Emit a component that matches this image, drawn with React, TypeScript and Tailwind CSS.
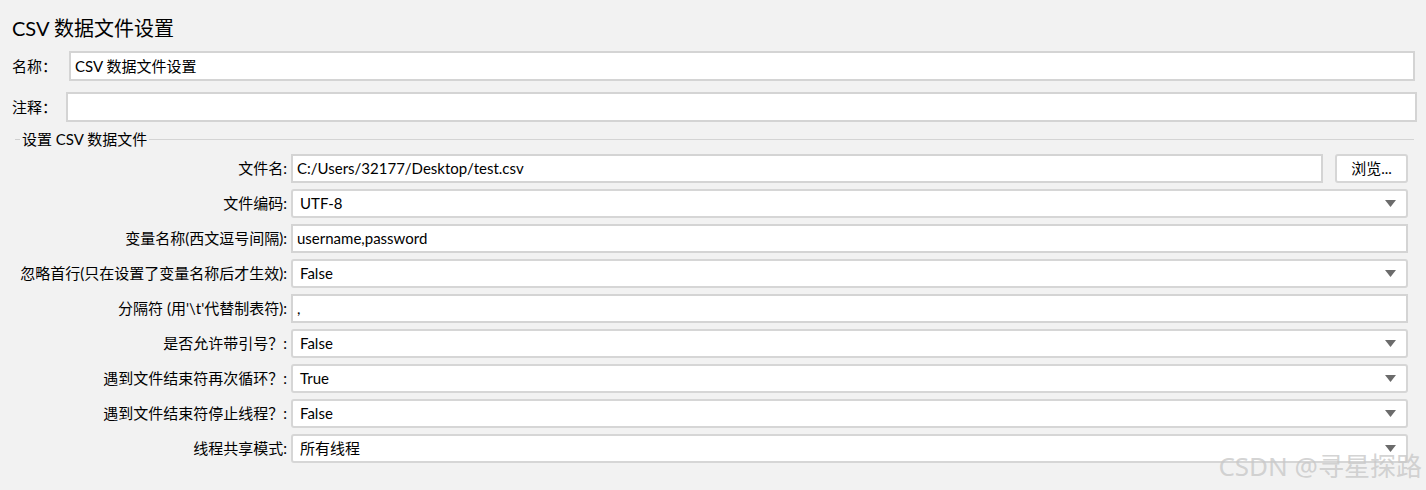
import React from 'react';

/* ------------------------------------------------------------------
 * small pieces
 * ---------------------------------------------------------------- */
const font = "font-['Segoe_UI','Lato','Noto_Sans_CJK_SC',sans-serif]";

const TextBox: React.FC<{ value?: string; className?: string }> = ({ value = '', className = '' }) => (
  <div
    className={`h-full flex items-center bg-white border-2 border-[#d4d4d4] pl-[4px] text-[15px] text-black whitespace-nowrap overflow-hidden ${className}`}
  >
    {value}
  </div>
);

const Combo: React.FC<{ value: string }> = ({ value }) => (
  <div className="flex-1 h-full flex items-center justify-between bg-white border-2 border-[#d6d6d6] rounded-[3px] pl-[7px] pr-[10px] text-[15px] text-black">
    <span>{value}</span>
    <svg width="11" height="7" viewBox="0 0 11 7">
      <path d="M0 0 H11 L5.5 7 Z" fill="#6b6b6b" />
    </svg>
  </div>
);

type Row = { label: string; value: string; kind: 'text' | 'combo' | 'file' };

const rows: Row[] = [
  { label: '文件名:', value: 'C:/Users/32177/Desktop/test.csv', kind: 'file' },
  { label: '文件编码:', value: 'UTF-8', kind: 'combo' },
  { label: '变量名称(西文逗号间隔):', value: 'username,password', kind: 'text' },
  { label: '忽略首行(只在设置了变量名称后才生效):', value: 'False', kind: 'combo' },
  { label: "分隔符 (用'\\t'代替制表符):", value: ',', kind: 'text' },
  { label: '是否允许带引号？:', value: 'False', kind: 'combo' },
  { label: '遇到文件结束符再次循环？:', value: 'True', kind: 'combo' },
  { label: '遇到文件结束符停止线程？:', value: 'False', kind: 'combo' },
  { label: '线程共享模式:', value: '所有线程', kind: 'combo' },
];

/* ------------------------------------------------------------------
 * page
 * ---------------------------------------------------------------- */
export default function App() {
  return (
    <div className={`relative w-[1426px] h-[490px] overflow-hidden bg-[#f2f2f2] text-black ${font}`}>
      {/* title */}
      <div className="h-[51px] pl-[12px] pt-[14px] text-[20px] leading-[28px]">CSV 数据文件设置</div>

      {/* name */}
      <div className="flex items-center h-[30px] pl-[12px] pr-[11px]">
        <span className="w-[57px] text-[15px]">名称：</span>
        <TextBox value="CSV 数据文件设置" className="flex-1" />
      </div>

      {/* comment */}
      <div className="flex items-center h-[30px] mt-[11px] pl-[12px] pr-[9px]">
        <span className="w-[54px] text-[15px]">注释：</span>
        <TextBox className="flex-1" />
      </div>

      {/* group title */}
      <div className="flex items-center h-[22px] mt-[6px] pl-[15px] pr-[12px]">
        <div className="w-[5px] h-px bg-[#cfcfcf]" />
        <span className="px-[2px] text-[15px] leading-[22px]">设置 CSV 数据文件</span>
        <div className="flex-1 h-px bg-[#d4d4d4]" />
      </div>

      {/* form rows */}
      <div className="flex flex-col gap-[6px] mt-[4px] pr-[18px]">
        {rows.map((r) => (
          <div key={r.label} className="flex items-center h-[29px]">
            <span className="w-[291px] pr-[4px] text-right text-[15px] whitespace-nowrap">{r.label}</span>
            {r.kind === 'combo' && <Combo value={r.value} />}
            {r.kind === 'text' && <TextBox value={r.value} className="flex-1" />}
            {r.kind === 'file' && (
              <>
                <TextBox value={r.value} className="flex-1" />
                <button className="ml-[12px] w-[73px] h-full bg-white border-2 border-[#d6d6d6] rounded-[3px] text-[15px]">
                  浏览...
                </button>
              </>
            )}
          </div>
        ))}
      </div>

      {/* watermark */}
      <div className="absolute right-[4px] bottom-[8px] text-[26px] leading-[32px] text-[#c8c8c8]/80 font-['Noto_Sans','Noto_Sans_CJK_SC',sans-serif]">
        CSDN @寻星探路
      </div>
    </div>
  );
}
